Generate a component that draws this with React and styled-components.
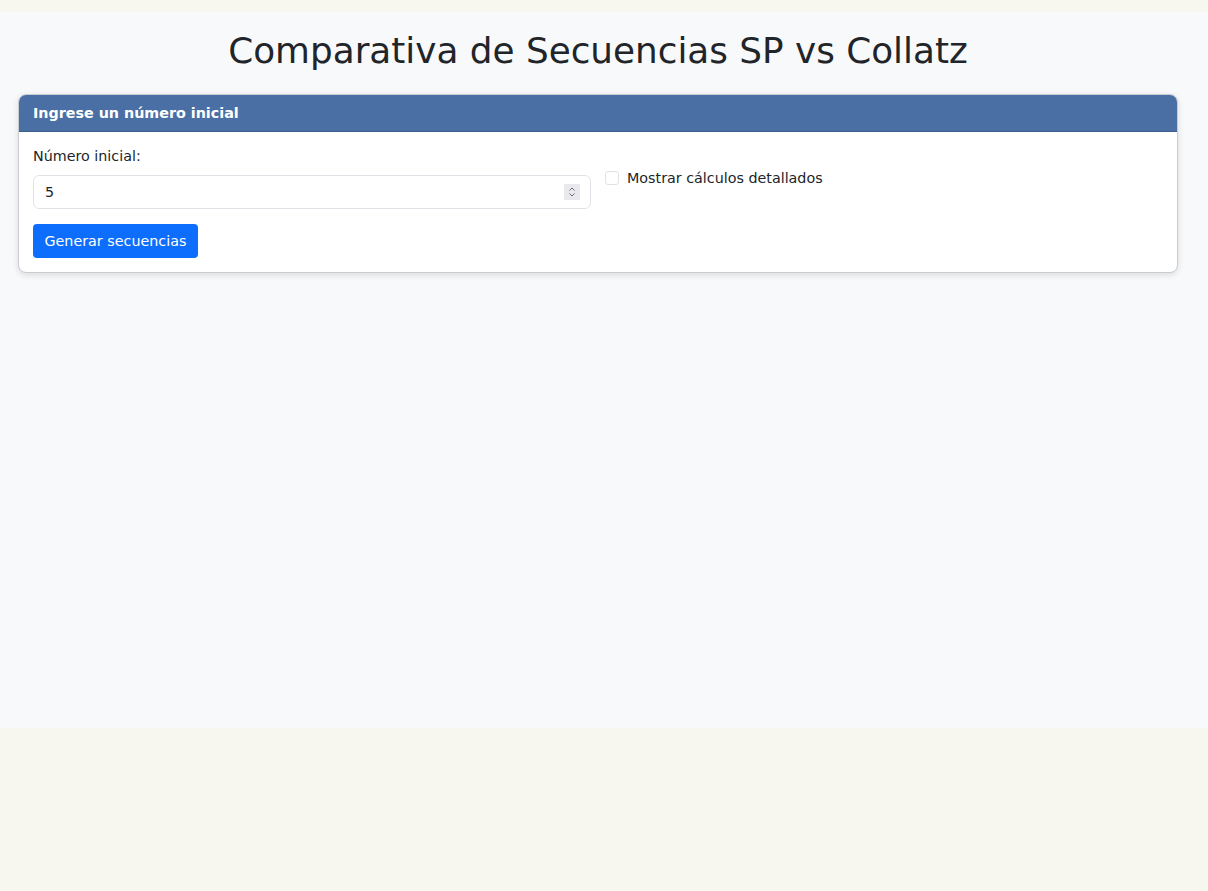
import React, { useState } from "react";
import styled, { createGlobalStyle } from "styled-components";

const GlobalStyle = createGlobalStyle`
  body {
    margin: 0;
    background: #f7f7f0;
    font-family: "DejaVu Sans", sans-serif;
    color: #212529;
  }
  * {
    box-sizing: border-box;
  }
`;

function App() {
  const [value, setValue] = useState(5);
  const [detailed, setDetailed] = useState(false);

  return (
    <>
      <GlobalStyle />
      <Page>
        <Wrapper>
          <Title>Comparativa de Secuencias SP vs Collatz</Title>
          <Card>
            <CardHeader>Ingrese un número inicial</CardHeader>
            <CardBody>
              <Row>
                <Field>
                  <Label htmlFor="start">Número inicial:</Label>
                  <InputWrap>
                    <NumberInput
                      id="start"
                      type="number"
                      value={value}
                      onChange={(e) => setValue(e.target.value)}
                    />
                    <Spinner>
                      <svg width="8" height="12" viewBox="0 0 8 12" fill="none">
                        <path d="M1.5 4.5 L4 2 L6.5 4.5" stroke="#6c6c70" strokeWidth="1" />
                        <path d="M1.5 7.5 L4 10 L6.5 7.5" stroke="#6c6c70" strokeWidth="1" />
                      </svg>
                    </Spinner>
                  </InputWrap>
                </Field>
                <CheckLabel>
                  <Check
                    type="checkbox"
                    checked={detailed}
                    onChange={() => setDetailed(!detailed)}
                  />
                  Mostrar cálculos detallados
                </CheckLabel>
              </Row>
              <Button>Generar secuencias</Button>
            </CardBody>
          </Card>
        </Wrapper>
      </Page>
    </>
  );
}

export default App;

const Page = styled.div`
  margin-top: 12px;
  height: 716px;
  background: #f8f9fa;
`;

const Wrapper = styled.div`
  width: 1160px;
  margin-left: 18px;
  padding-top: 18px;
`;

const Title = styled.h1`
  margin: 0 0 21px;
  text-align: center;
  font-size: 35.8px;
  font-weight: 400;
  line-height: 1.2;
  color: #212529;
`;

const Card = styled.div`
  background: #fff;
  border: 1px solid #c9ccd0;
  border-radius: 8px;
  box-shadow: 0 2px 6px rgba(0, 0, 0, 0.12);
  overflow: hidden;
`;

const CardHeader = styled.div`
  background: #4a6fa5;
  color: #fff;
  font-size: 14.3px;
  font-weight: 700;
  line-height: 22px;
  padding: 7px 14px;
  border-bottom: 1px solid #3d5d8c;
`;

const CardBody = styled.div`
  padding: 14px;
`;

const Row = styled.div`
  display: grid;
  grid-template-columns: 1fr 1fr;
  column-gap: 14px;
  align-items: center;
  margin-bottom: 15px;
`;

const Field = styled.div`
  display: flex;
  flex-direction: column;
`;

const Label = styled.label`
  font-size: 14.3px;
  line-height: 21px;
  margin-bottom: 8px;
`;

const InputWrap = styled.div`
  position: relative;
  display: flex;
`;

const NumberInput = styled.input`
  flex: 1;
  height: 34px;
  padding: 0 11px;
  font-family: inherit;
  font-size: 14.3px;
  color: #212529;
  border: 1px solid #dee2e6;
  border-radius: 6px;
  background: #fff;
  outline: none;
  appearance: textfield;
  &::-webkit-inner-spin-button,
  &::-webkit-outer-spin-button {
    -webkit-appearance: none;
    margin: 0;
  }
`;

const Spinner = styled.span`
  position: absolute;
  right: 11px;
  top: 9px;
  width: 16px;
  height: 16px;
  background: #e9e9ed;
  display: flex;
  align-items: center;
  justify-content: center;
  pointer-events: none;
`;

const CheckLabel = styled.label`
  display: flex;
  align-items: center;
  gap: 8px;
  font-size: 14.3px;
  line-height: 21px;
  margin-top: 2px;
`;

const Check = styled.input`
  appearance: none;
  width: 14px;
  height: 14px;
  margin: 0;
  border: 1px solid #dee2e6;
  border-radius: 3px;
  background: #fff;
`;

const Button = styled.button`
  height: 34px;
  padding: 0 11.5px;
  font-family: inherit;
  font-size: 14.3px;
  color: #fff;
  background: #0d6efd;
  border: none;
  border-radius: 4px;
  cursor: pointer;
`;
